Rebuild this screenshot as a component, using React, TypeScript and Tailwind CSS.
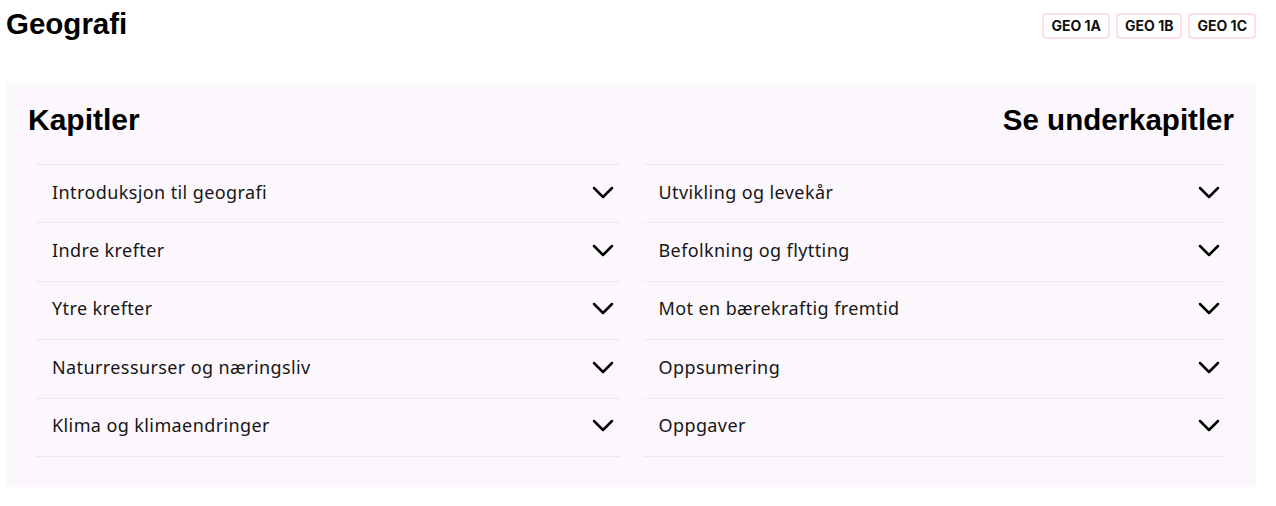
const left = [
  'Introduksjon til geografi',
  'Indre krefter',
  'Ytre krefter',
  'Naturressurser og næringsliv',
  'Klima og klimaendringer',
]

const right = [
  'Utvikling og levekår',
  'Befolkning og flytting',
  'Mot en bærekraftig fremtid',
  'Oppsumering',
  'Oppgaver',
]

function Chevron() {
  return (
    <svg width="22" height="13" viewBox="0 0 22 13" fill="none" className="mr-[6px]">
      <path d="M2 2l9 9 9-9" stroke="#000" strokeWidth="2.5" strokeLinecap="round" strokeLinejoin="round" />
    </svg>
  )
}

function ChapterList({ items }: { items: string[] }) {
  return (
    <div className="flex-1 border-t border-[#efe6ef]">
      {items.map(item => (
        <div
          key={item}
          className="flex h-[58.4px] items-center justify-between border-b border-[#efe6ef] pl-4 pb-[3px]"
        >
          <span className="font-['Noto_Sans',sans-serif] text-[18px] tracking-[0.4px] text-[#161616]">
            {item}
          </span>
          <Chevron />
        </div>
      ))}
    </div>
  )
}

export default function App() {
  return (
    <div className="min-h-[506px] bg-white pl-[6px] pr-[20px] pt-[5px] font-['Liberation_Sans',Arial,sans-serif]">
      <div className="flex items-start justify-between">
        <h1 className="text-[29.5px] font-bold leading-[38px] text-black">Geografi</h1>
        <div className="mt-[8px] flex gap-[6px] font-['Inter',sans-serif]">
          {['GEO 1A', 'GEO 1B', 'GEO 1C'].map(tag => (
            <span
              key={tag}
              className="rounded-[4px] border-2 border-[#fde0ea] px-[7px] py-[1px] text-[14px] font-bold leading-[20px] text-[#111]"
            >
              {tag}
            </span>
          ))}
        </div>
      </div>

      <div className="mt-[40px] bg-[#fcf7fc] px-[22px] pb-[30px] pt-[18px]">
        <div className="flex items-center justify-between">
          <h2 className="text-[30px] font-bold leading-[38px] text-black">Kapitler</h2>
          <h2 className="text-[29.5px] font-bold leading-[38px] text-black">Se underkapitler</h2>
        </div>
        <div className="mt-[25px] flex gap-[23px] px-2">
          <ChapterList items={left} />
          <ChapterList items={right} />
        </div>
      </div>
    </div>
  )
}
